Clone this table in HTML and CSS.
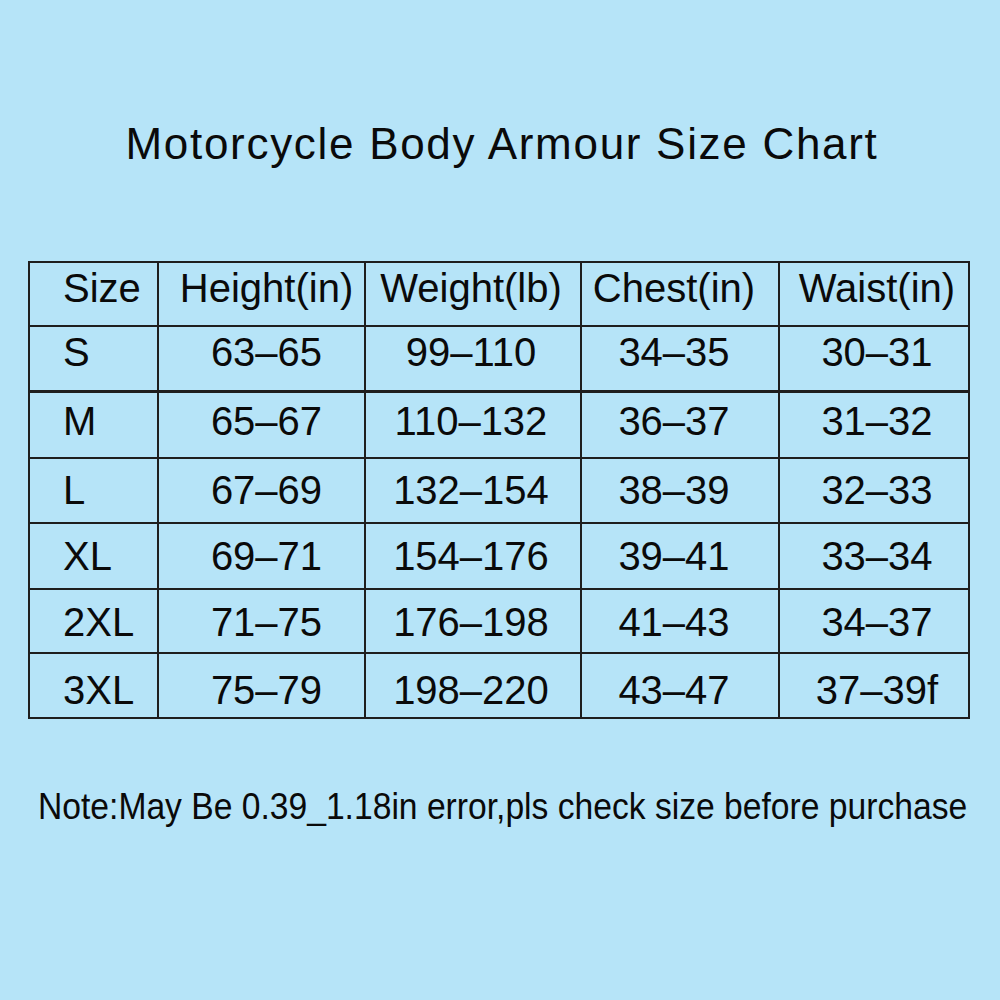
FILE: index.html
```html
<!DOCTYPE html>
<html>
<head>
<meta charset="utf-8">
<link rel="stylesheet" href="styles.css">
</head>
<body>
<div class="page">
  <h1 class="title">Motorcycle Body Armour Size Chart</h1>
  <table class="chart">
    <colgroup>
      <col class="c1"><col class="c2"><col class="c3"><col class="c4"><col class="c5">
    </colgroup>
    <tr class="r0"><td class="size">Size</td><td>Height(in)</td><td>Weight(lb)</td><td>Chest(in)</td><td>Waist(in)</td></tr>
    <tr class="r1"><td class="size">S</td><td>63–65</td><td>99–110</td><td>34–35</td><td>30–31</td></tr>
    <tr class="r2"><td class="size">M</td><td>65–67</td><td>110–132</td><td>36–37</td><td>31–32</td></tr>
    <tr class="r3"><td class="size">L</td><td>67–69</td><td>132–154</td><td>38–39</td><td>32–33</td></tr>
    <tr class="r4"><td class="size">XL</td><td>69–71</td><td>154–176</td><td>39–41</td><td>33–34</td></tr>
    <tr class="r5"><td class="size">2XL</td><td>71–75</td><td>176–198</td><td>41–43</td><td>34–37</td></tr>
    <tr class="r6"><td class="size">3XL</td><td>75–79</td><td>198–220</td><td>43–47</td><td>37–39f</td></tr>
  </table>
  <p class="note"><span class="note-text">Note:May Be 0.39_1.18in error,pls check size before purchase</span></p>
</div>
</body>
</html>
```
FILE: styles.css
```css
html, body {
  margin: 0;
  padding: 0;
  background: #b6e4f8;
}
.page {
  width: 1000px;
  height: 1000px;
  overflow: hidden;
  background: #b6e4f8;
  color: #0a0a0a;
  font-family: "Liberation Sans", Arial, sans-serif;
  padding-top: 119px;
  box-sizing: border-box;
}
.title {
  margin: 0 0 0 4px;
  font-size: 44px;
  font-weight: normal;
  line-height: 50px;
  letter-spacing: 1.7px;
  text-align: center;
}
.chart {
  margin: 92px 0 0 28px;
  width: 941px;
  border-collapse: collapse;
  table-layout: fixed;
  font-size: 40px;
  line-height: 44px;
}
.c1 { width: 129px; }
.c2 { width: 207px; }
.c3 { width: 216px; }
.c4 { width: 198px; }
.c5 { width: 190px; }
.chart td {
  border: 2px solid #1e1e1e;
  text-align: center;
  vertical-align: top;
  padding: 0;
  white-space: nowrap;
}
.chart td.size {
  text-align: left;
  padding-left: 33px;
}
.r0 { height: 64px; }
.r1 { height: 65px; }
.r2 { height: 67px; }
.r3 { height: 65px; }
.r4 { height: 66px; }
.r5 { height: 64px; }
.r6 { height: 65px; }
.r0 td { padding-top: 3px; }
.r1 td { padding-top: 3px; border-bottom-width: 3px; }
.r2 td { padding-top: 6px; }
.r3 td { padding-top: 9px; }
.r4 td { padding-top: 10px; }
.r5 td { padding-top: 10px; }
.r6 td { padding-top: 14px; }
.chart td:nth-child(2) { padding-left: 10px; }
.chart td:nth-child(3) { padding-right: 4px; }
.chart td:nth-child(4) { padding-right: 12px; }
.chart td:nth-child(5) { padding-left: 6px; }
.note {
  margin: 63px 0 0 38px;
  font-size: 37px;
  line-height: 50px;
  white-space: nowrap;
}
.note-text {
  display: inline-block;
  transform: scaleX(0.909);
  transform-origin: left center;
}
```
